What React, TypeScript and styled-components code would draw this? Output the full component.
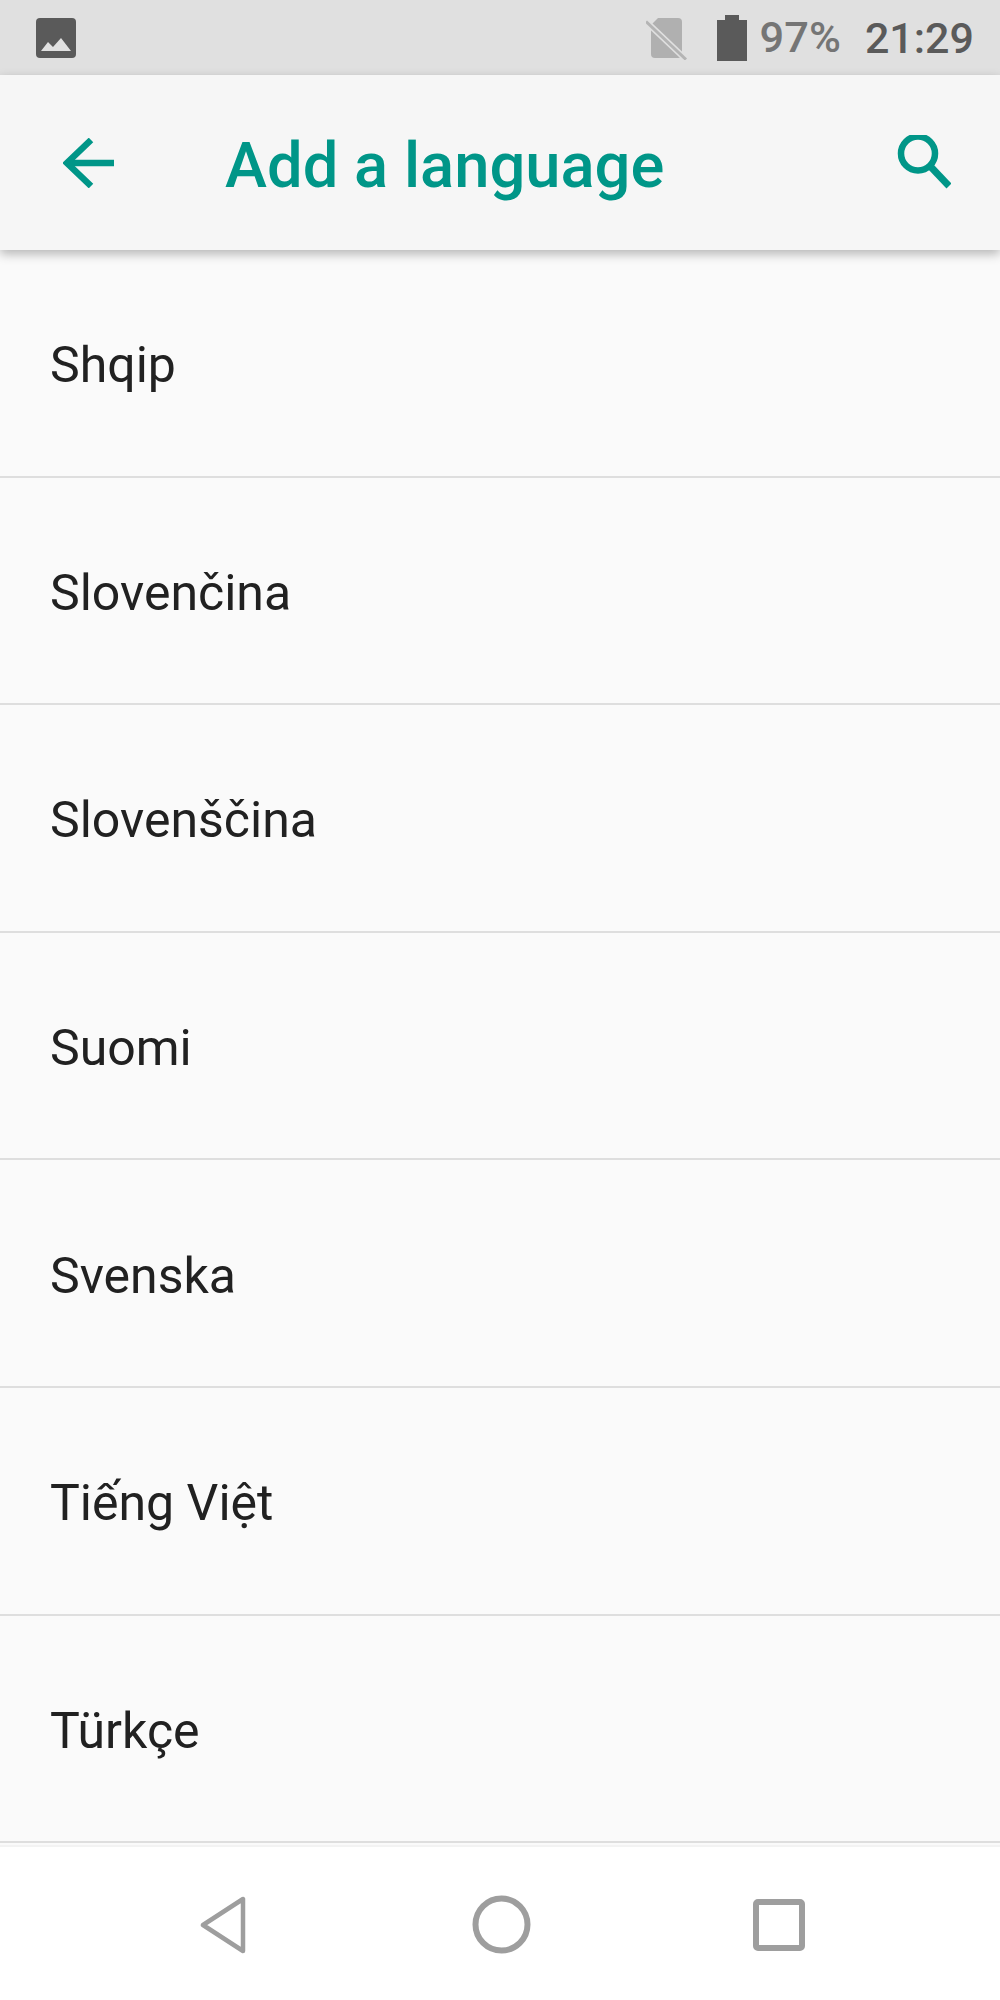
import React from "react";
import styled, { createGlobalStyle } from "styled-components";

const Global = createGlobalStyle`
  html, body { margin: 0; padding: 0; background: #fafafa; }
  * { box-sizing: border-box; }
`;

const Screen = styled.div`
  width: 1000px;
  height: 2000px;
  display: flex;
  flex-direction: column;
  overflow: hidden;
  font-family: Roboto, "Noto Sans", sans-serif;
  background: #fafafa;
`;

const StatusBar = styled.div`
  height: 75px;
  flex: none;
  background: #e0e0e0;
  display: flex;
  align-items: center;
  padding: 0 26px 0 36px;
`;

const StatusSpacer = styled.div`
  flex: 1;
`;

const StatusIcon = styled.svg<{ $ml?: number }>`
  display: block;
  flex: none;
  margin-left: ${(p) => p.$ml ?? 0}px;
`;

const Percent = styled.span`
  font-size: 43.4px;
  font-weight: 500;
  color: #757575;
  margin-left: 13px;
`;

const Clock = styled.span`
  font-size: 43px;
  font-weight: 500;
  color: #5a5a5a;
  margin-left: 24px;
`;

const AppBar = styled.header`
  position: relative;
  z-index: 1;
  height: 175px;
  flex: none;
  background: #f6f6f6;
  box-shadow: 0 4px 10px rgba(0, 0, 0, 0.28);
  display: flex;
  align-items: center;
  padding: 0 49px 0 63px;
`;

const Title = styled.h1`
  flex: 1;
  margin: 6px 0 0 110px;
  font-size: 63.3px;
  font-weight: 500;
  color: #009688;
  line-height: 1;
`;

const List = styled.main`
  flex: 1;
  display: flex;
  flex-direction: column;
`;

const Row = styled.div`
  height: 227.6px;
  flex: none;
  display: flex;
  align-items: center;
  padding: 5px 0 0 50px;
  border-bottom: 2px solid #dedede;
  font-size: 50px;
  color: #212121;
`;

const NavBar = styled.nav`
  height: 155px;
  flex: none;
  background: #ffffff;
  border-top: 2px solid #f3f3f3;
  padding-top: 2px;
  display: flex;
  align-items: center;
`;

const NavSlot = styled.div<{ $w: number }>`
  display: flex;
  flex: none;
  width: ${(p) => p.$w}px;
  justify-content: flex-end;
`;

const languages = ["Shqip", "Slovenčina", "Slovenščina", "Suomi", "Svenska", "Tiếng Việt", "Türkçe"];

export default function App() {
  return (
    <Screen>
      <Global />
      <StatusBar>
        <StatusIcon width="40" height="40" viewBox="0 0 40 40">
          <rect width="40" height="40" rx="4" fill="#5a5a5a" />
          <path d="M5 33 L12 24 L17 29 L25 20 L35 33 Z" fill="#e0e0e0" />
        </StatusIcon>
        <StatusSpacer />
        <StatusIcon width="42" height="44" viewBox="0 0 42 44">
          <path d="M12 2 H32 a4 4 0 0 1 4 4 V38 a4 4 0 0 1 -4 4 H9 a4 4 0 0 1 -4 -4 V9 Z" fill="#b0b0b0" />
          <path d="M0 5.5 L40 43.5" stroke="#e0e0e0" strokeWidth="6" />
          <path d="M0 5.5 L40 43.5" stroke="#b4b4b4" strokeWidth="3" />
        </StatusIcon>
        <StatusIcon $ml={29} width="30" height="46" viewBox="0 0 30 46">
          <path d="M0 5 H8 V0 H22 V5 H30 V46 H0 Z" fill="#5a5a5a" />
        </StatusIcon>
        <Percent>97%</Percent>
        <Clock>21:29</Clock>
      </StatusBar>
      <AppBar>
        <svg width="52" height="50" viewBox="0 0 52 50" fill="none" stroke="#009688" strokeWidth="6.5">
          <path d="M51 25 H5" />
          <path d="M28 2 L4 25 L28 48" />
        </svg>
        <Title>Add a language</Title>
        <svg width="54" height="56" viewBox="0 0 54 56" fill="none" stroke="#009688" strokeWidth="6.5">
          <circle cx="21" cy="18.5" r="17" />
          <path d="M33 31 L52 51" strokeWidth="7" />
        </svg>
      </AppBar>
      <List>
        {languages.map((l) => (
          <Row key={l}>{l}</Row>
        ))}
      </List>
      <NavBar>
        <NavSlot $w={246}>
          <svg width="46" height="58" viewBox="0 0 46 58" fill="none" stroke="#9e9e9e" strokeWidth="4.5" strokeLinejoin="round">
            <path d="M43 3 V55 L3 29 Z" />
          </svg>
        </NavSlot>
        <NavSlot $w={285}>
          <svg width="59" height="59" viewBox="0 0 59 59" fill="none" stroke="#9e9e9e" strokeWidth="6">
            <circle cx="29.5" cy="29.5" r="26" />
          </svg>
        </NavSlot>
        <NavSlot $w={274}>
          <svg width="52" height="52" viewBox="0 0 52 52" fill="none" stroke="#9e9e9e" strokeWidth="6">
            <rect x="3" y="3" width="46" height="46" rx="2" />
          </svg>
        </NavSlot>
      </NavBar>
    </Screen>
  );
}
